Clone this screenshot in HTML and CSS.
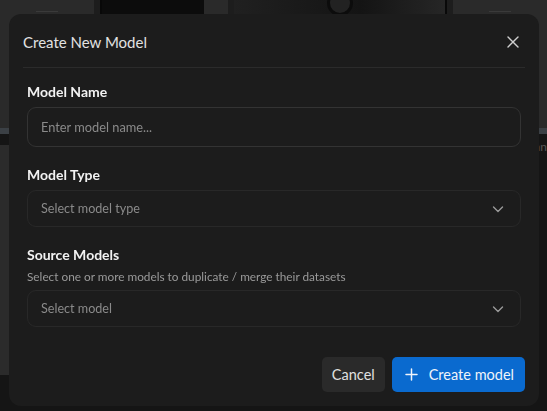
FILE: index.html
```html
<!DOCTYPE html>
<html lang="en">
<head>
    <meta charset="UTF-8">
    <title>Models</title>
    <link rel="stylesheet" href="styles.css">
</head>
<body>
    <div class="page">
        <div class="gallery">
            <div class="thumb thumb-icon"><span class="spark"></span></div>
            <div class="thumb thumb-dark"></div>
            <div class="thumb thumb-photo"><span class="knob"></span></div>
            <div class="thumb thumb-icon"><span class="spark"></span></div>
        </div>
        <div class="toolbar-line"></div>
        <div class="workspace">
            <div class="sidebar"></div>
            <div class="content"><span class="content-label">nn</span></div>
        </div>
    </div>

    <div class="overlay">
        <div class="modal">
            <div class="modal-header">
                <h2>Create New Model</h2>
                <button class="close-btn" aria-label="Close">
                    <svg width="12" height="12" viewBox="0 0 12 12"><path d="M1 1L11 11M11 1L1 11" stroke="currentColor" stroke-width="1.4" stroke-linecap="round"/></svg>
                </button>
            </div>
            <div class="modal-body">
                <div class="field">
                    <label>Model Name</label>
                    <input class="text-input" type="text" placeholder="Enter model name...">
                </div>
                <div class="field">
                    <label>Model Type</label>
                    <div class="select">
                        <span>Select model type</span>
                        <svg width="12" height="12" viewBox="0 0 12 12"><path d="M1.5 4L6 8.5L10.5 4" fill="none" stroke="currentColor" stroke-width="1.4" stroke-linecap="round" stroke-linejoin="round"/></svg>
                    </div>
                </div>
                <div class="field">
                    <label>Source Models</label>
                    <p class="hint">Select one or more models to duplicate / merge their datasets</p>
                    <div class="select">
                        <span>Select model</span>
                        <svg width="12" height="12" viewBox="0 0 12 12"><path d="M1.5 4L6 8.5L10.5 4" fill="none" stroke="currentColor" stroke-width="1.4" stroke-linecap="round" stroke-linejoin="round"/></svg>
                    </div>
                </div>
            </div>
            <div class="modal-footer">
                <button class="btn btn-ghost">Cancel</button>
                <button class="btn btn-primary">
                    <svg width="13" height="13" viewBox="0 0 13 13"><path d="M6.5 1V12M1 6.5H12" stroke="currentColor" stroke-width="1.5" stroke-linecap="round"/></svg>
                    Create model
                </button>
            </div>
        </div>
    </div>
</body>
</html>
```

FILE: styles.css
```css
* { box-sizing: border-box; }
html, body { margin: 0; height: 100%; }
body { font-family: Lato, "Noto Sans", sans-serif; background: #111; color: #e6e6e6; overflow: hidden; }

/* dimmed page behind the dialog */
.page { height: 100%; display: flex; flex-direction: column; }
.gallery { height: 128px; background: #1d1d1d; display: flex; gap: 6px; }
.thumb { height: 100%; }
.thumb-icon { width: 94px; background: #2a2a2a; display: flex; justify-content: center; padding-top: 4px; }
.thumb-dark { width: 128px; background: #0c0c0c; border-left: 2px solid #080808; border-right: 24px solid #2a2a2a; }
.thumb-photo { flex: 1; background: linear-gradient(90deg, #202020, #141414 60%, #262626); border-right: 2px solid #090909; display: flex; justify-content: center; }
.knob { width: 26px; height: 26px; border-radius: 50%; border: 3px solid #0c0c0c; background: #222; margin-top: -10px; }
.spark { width: 22px; height: 8px; border-bottom: 1px solid #3a3a3a; }
.toolbar-line { height: 6px; background: #3b4045; }
.workspace { flex: 1; display: flex; flex-direction: column; background: #151515; }
.sidebar { height: 230px; width: 30px; margin-top: 11px; background: #2b2b2b; }
.content { position: absolute; right: 0; top: 135px; }
.content-label { font-size: 12px; color: #555; }

/* dialog */
.overlay { position: fixed; inset: 0; padding: 14px 0 0 9px; }
.modal { width: 530px; height: 392px; background: #1c1c1c; border-radius: 12px; display: flex; flex-direction: column; }
.modal-header { display: flex; align-items: center; justify-content: space-between; height: 54px; margin: 0 14px; border-bottom: 1px solid #2b2b2b; padding: 2px 0 0 0; }
.modal-header h2 { margin: 0; font-size: 15px; font-weight: 400; color: #e2e2e2; }
.close-btn { background: none; border: none; color: #cfcfcf; padding: 0; margin-right: 6px; display: flex; cursor: pointer; }

.modal-body { padding: 15px 18px 0 18px; display: flex; flex-direction: column; gap: 19px; flex: 1; }
.field { display: flex; flex-direction: column; }
.field label { font-size: 14px; font-weight: 700; color: #f2f2f2; margin-bottom: 7px; }
.hint { margin: -1px 0 6px; font-size: 11.8px; color: #9a9a9a; }
.text-input { height: 40px; border: 1px solid #333; border-radius: 9px; background: #1c1c1c; padding: 0 13px; font: inherit; font-size: 12.8px; color: #ddd; outline: none; }
.text-input::placeholder { color: #8a8a8a; }
.select { height: 37px; border: 1px solid #282828; border-radius: 9px; padding: 0 16px 0 13px; display: flex; align-items: center; justify-content: space-between; font-size: 12.6px; color: #8a8a8a; }
.select svg { color: #9a9a9a; }

.modal-footer { display: flex; justify-content: flex-end; gap: 7px; padding: 0 14px 14px; }
.btn { height: 35px; border: none; border-radius: 5px; font: inherit; font-size: 14.5px; cursor: pointer; display: flex; align-items: center; }
.btn-ghost { background: #2a2a2a; color: #e0e0e0; padding: 0 10px; }
.btn-primary { background: #0a6acf; color: #f0f4fa; padding: 0 11px 0 13px; gap: 11px; }
```
